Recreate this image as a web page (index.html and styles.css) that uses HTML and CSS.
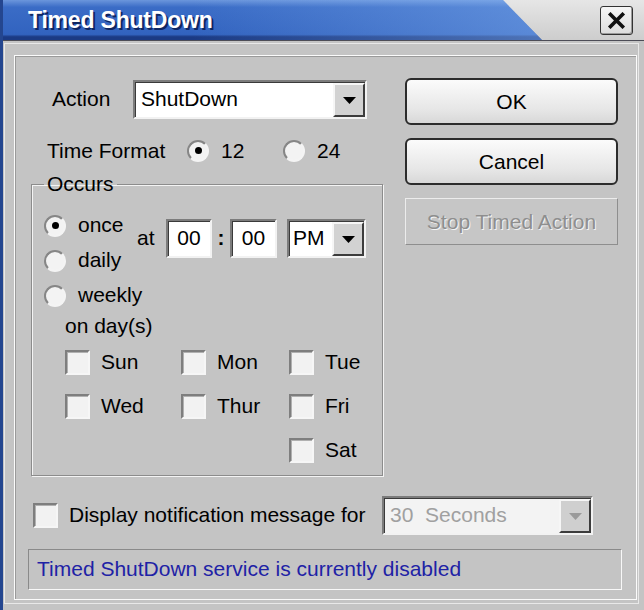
FILE: index.html
```html
<!DOCTYPE html>
<html lang="en">
<head>
    <meta charset="UTF-8">
    <title>Timed ShutDown</title>
    <link rel="stylesheet" href="styles.css">
</head>
<body>
    <div class="window">
        <div class="titlebar">
            <div class="title">Timed ShutDown</div>
            <div class="close">
                <svg width="19" height="17" viewBox="0 0 19 17"><path d="M3.5 2.5l12 12M15.5 2.5l-12 12" stroke="#111" stroke-width="3.6" stroke-linecap="square"/></svg>
            </div>
        </div>

        <div class="client">
            <div class="panel">
                <div class="top">
                    <div class="left">
                        <div class="action-row">
                            <span class="action-label">Action</span>
                            <div class="combo action-combo">
                                <span class="combo-text">ShutDown</span>
                                <span class="drop"><svg width="13" height="7" viewBox="0 0 13 7"><path d="M0 0h13L6.5 7z" fill="#000"/></svg></span>
                            </div>
                        </div>

                        <div class="format-row">
                            <span class="format-label">Time Format</span>
                            <span class="option"><span class="radio checked"></span>12</span>
                            <span class="option"><span class="radio"></span>24</span>
                        </div>

                        <fieldset class="occurs">
                            <legend>Occurs</legend>
                            <div class="occurs-main">
                                <div class="radios">
                                    <div class="radio-row"><span class="radio checked"></span>once</div>
                                    <div class="radio-row"><span class="radio"></span>daily</div>
                                    <div class="radio-row"><span class="radio"></span>weekly</div>
                                </div>
                                <div class="time">
                                    <span class="at">at</span>
                                    <div class="field hour">00</div>
                                    <span class="colon">:</span>
                                    <div class="field minute">00</div>
                                    <div class="combo ampm">
                                        <span class="combo-text">PM</span>
                                        <span class="drop"><svg width="13" height="7" viewBox="0 0 13 7"><path d="M0 0h13L6.5 7z" fill="#000"/></svg></span>
                                    </div>
                                </div>
                            </div>
                            <div class="ondays">on day(s)</div>
                            <div class="days">
                                <div class="day"><span class="check"></span>Sun</div>
                                <div class="day"><span class="check"></span>Mon</div>
                                <div class="day"><span class="check"></span>Tue</div>
                                <div class="day"><span class="check"></span>Wed</div>
                                <div class="day"><span class="check"></span>Thur</div>
                                <div class="day"><span class="check"></span>Fri</div>
                                <div class="day sat"><span class="check"></span>Sat</div>
                            </div>
                        </fieldset>
                    </div>

                    <div class="buttons">
                        <button class="btn">OK</button>
                        <button class="btn">Cancel</button>
                        <button class="btn disabled">Stop Timed Action</button>
                    </div>
                </div>

                <div class="notify-row">
                    <span class="check"></span>
                    <span class="notify-label">Display notification message for</span>
                    <div class="combo seconds">
                        <span class="combo-text">30  Seconds</span>
                        <span class="drop"><svg width="13" height="7" viewBox="0 0 13 7"><path d="M0 0h13L6.5 7z" fill="#9a9a9a"/></svg></span>
                    </div>
                </div>

                <div class="status">Timed ShutDown service is currently disabled</div>
            </div>
        </div>
    </div>
</body>
</html>
```

FILE: styles.css
```css
* {
    box-sizing: border-box;
}
body {
    margin: 0;
    background: #c4c4c4;
    font-family: "Liberation Sans", Arial, sans-serif;
    font-size: 21px;
    line-height: 1.15;
    color: #000;
}
.window {
    width: 644px;
    height: 610px;
    overflow: hidden;
    border-left: 3px solid #24468f;
    background: #c4c4c4;
}

/* title bar */
.titlebar {
    display: flex;
    align-items: center;
    height: 41px;
    border-bottom: 1px solid #4c4c56;
    background: linear-gradient(#e6e6e6, #cdcdcd);
}
.title {
    align-self: stretch;
    width: 539px;
    padding: 1px 0 0 25px;
    display: flex;
    align-items: center;
    clip-path: polygon(0 0, 500px 0, 539px 100%, 0 100%);
    background:
        linear-gradient(to right, rgba(120, 170, 240, 0) 35%, rgba(140, 185, 245, 0.45) 100%),
        linear-gradient(#6b96dc 0, #3a6cc6 18%, #3263bf 86%, #1b3a84 92%, #1b3a84 100%);
    color: #fff;
    font-weight: bold;
    font-size: 23px;
    letter-spacing: -0.2px;
    text-shadow: 2px 2px 0 #0f2662;
}
.close {
    margin-left: auto;
    margin-right: 11px;
    width: 33px;
    height: 29px;
    display: flex;
    align-items: center;
    justify-content: center;
    border: 1px solid #333;
    border-radius: 3px;
    background: linear-gradient(#f6f6f6, #dcdcdc);
    box-shadow: inset -1px -1px 0 #9a9a9a;
}

/* frames */
.client {
    margin: 2px 5px 0 1px;
    height: 561px;
    border: 1px solid #e8e8e8;
    padding: 11px 0 0 9px;
}
.panel {
    width: 623px;
    height: 545px;
    border: 1px solid #fbfbfb;
    box-shadow: inset 1px 1px 0 #9a9a9a;
    padding: 22px 0 0 15px;
}
.top {
    display: flex;
    gap: 21px;
}
.left {
    width: 354px;
}

/* combo and fields */
.combo,
.field {
    display: flex;
    align-items: center;
    height: 39px;
    background: #fff;
    border: 2px solid;
    border-color: #7c7c7c #f2f2f2 #f2f2f2 #7c7c7c;
    box-shadow: inset 1px 1px 0 #3a3a3a;
}
.combo-text {
    flex: 1;
    padding-left: 6px;
    white-space: pre;
}
.drop {
    width: 32px;
    align-self: stretch;
    margin: 1px 0 0;
    display: flex;
    align-items: center;
    justify-content: center;
    background: #d2d2d2;
    border: 2px solid;
    border-color: #f6f6f6 #3c3c3c #3c3c3c #f6f6f6;
}

.action-row {
    margin-top: 2px;
    height: 39px;
    display: flex;
    align-items: center;
    padding-left: 22px;
}
.action-label {
    width: 81px;
}
.action-combo {
    width: 234px;
}

.format-row {
    margin-top: 19px;
    height: 26px;
    display: flex;
    align-items: center;
    padding-left: 17px;
}
.format-label {
    width: 140px;
}
.option {
    width: 96px;
    display: flex;
    align-items: center;
    gap: 12px;
}

/* radio and check */
.radio {
    width: 22px;
    height: 22px;
    flex: none;
    display: inline-flex;
    align-items: center;
    justify-content: center;
    border-radius: 50%;
    border: 2px solid;
    border-color: #868686 #f4f4f4 #f4f4f4 #868686;
    background: #f3f3f3;
}
.radio.checked::after {
    content: "";
    width: 7px;
    height: 7px;
    border-radius: 50%;
    background: #000;
}
.check {
    width: 25px;
    height: 25px;
    flex: none;
    border: 2px solid;
    border-color: #7e7e7e #f6f6f6 #f6f6f6 #7e7e7e;
    box-shadow: inset 1px 1px 0 #b0b0b0;
    background: #f2f2f2;
}

/* occurs group */
.occurs {
    margin: 8px 0 0 1px;
    width: 352px;
    min-width: 0;
    padding: 12px 0 3px 12px;
    border: 1px solid #8c8c8c;
    box-shadow: inset 1px 1px 0 #f4f4f4, 1px 1px 0 #f4f4f4;
}
.occurs legend {
    padding: 0 3px;
    line-height: 24px;
}
.occurs-main {
    display: flex;
}
.radios {
    width: 93px;
}
.radio-row {
    height: 35px;
    display: flex;
    align-items: center;
    gap: 12px;
}
.time {
    margin-top: 11px;
    height: 39px;
    display: flex;
    align-items: center;
}
.at {
    width: 29px;
}
.field {
    justify-content: center;
}
.hour {
    width: 46px;
}
.minute {
    width: 47px;
}
.colon {
    width: 18px;
    text-align: center;
    font-weight: bold;
}
.ampm {
    width: 79px;
    margin-left: 10px;
}
.ampm .combo-text {
    padding-left: 4px;
}
.ondays {
    height: 27px;
    display: flex;
    align-items: center;
    padding-left: 21px;
}
.days {
    display: grid;
    grid-template-columns: 116px 108px 1fr;
    grid-auto-rows: 44px;
    padding-left: 21px;
}
.day {
    display: flex;
    align-items: center;
    gap: 11px;
}
.sat {
    grid-column: 3;
}

/* buttons */
.buttons {
    width: 213px;
    display: flex;
    flex-direction: column;
    gap: 13px;
}
.btn {
    height: 47px;
    font-family: inherit;
    font-size: 21px;
    white-space: nowrap;
    color: #000;
    border: 2px solid #2c2c2c;
    border-radius: 6px;
    background: linear-gradient(#fbfbfb, #e6e6e6 70%, #d8d8d8);
}
.btn.disabled {
    color: #8e8e8e;
    text-shadow: 1px 1px 0 #f4f4f4;
    border: 1px solid;
    border-color: #ececec #8e8e8e #8e8e8e #ececec;
    border-radius: 0;
    background: #c6c6c6;
}

/* bottom */
.notify-row {
    margin-top: 20px;
    height: 39px;
    display: flex;
    align-items: center;
    padding-left: 3px;
}
.notify-label {
    width: 313px;
    margin-left: 11px;
    white-space: nowrap;
}
.seconds {
    width: 211px;
    background: #f3f3f3;
    color: #a0a0a0;
}
.seconds .drop {
    background: #cfcfcf;
}
.status {
    margin: 14px 0 0 -2px;
    width: 594px;
    height: 41px;
    display: flex;
    align-items: center;
    padding-left: 8px;
    border: 1px solid;
    border-color: #8a8a8a #f8f8f8 #f8f8f8 #8a8a8a;
    color: #1e22a6;
}
```
